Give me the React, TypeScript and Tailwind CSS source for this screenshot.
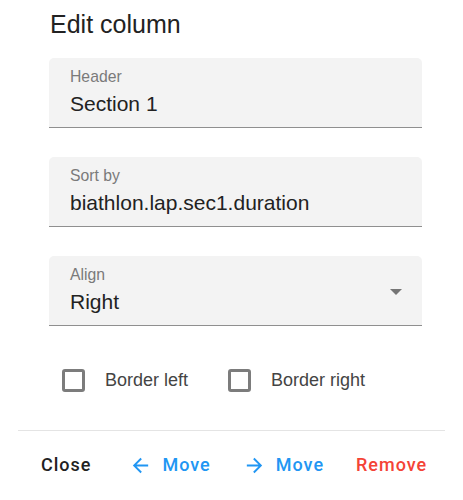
import React from "react";

function Field({ label, value, select }: { label: string; value: string; select?: boolean }) {
  return (
    <div className="relative h-[70px] rounded-t-[5px] bg-[#f3f3f3] border-b border-[#8f8f8f] px-[21px]">
      <div className="pt-[10px] text-[15.75px] leading-[18px] text-[#7a7a7a]">{label}</div>
      <div className="mt-[6px] text-[21px] leading-[24px] text-[#222]">{value}</div>
      {select && (
        <svg className="absolute right-[20px] top-[33px]" width="12" height="6" viewBox="0 0 12 6">
          <path d="M0 0h12L6 6z" fill="#757575" />
        </svg>
      )}
    </div>
  );
}

function Check({ label }: { label: string }) {
  return (
    <label className="flex items-center gap-[20px]">
      <span className="w-[23px] h-[23px] rounded-[3px] border-[3px] border-[#7c7c7c]" />
      <span className="text-[18px] leading-[23px] text-[#444]">{label}</span>
    </label>
  );
}

export default function App() {
  return (
    <div className="w-[463px] h-[500px] bg-white" style={{ fontFamily: '"Liberation Sans", Arial, sans-serif' }}>
      <div className="pl-[49px] pr-[41px]">
        <h2 className="pt-[8px] pl-[1px] text-[25px] leading-[32px] font-normal text-[#222]">Edit column</h2>
        <div className="mt-[18px] flex flex-col gap-[29px]">
          <Field label="Header" value="Section 1" />
          <Field label="Sort by" value="biathlon.lap.sec1.duration" />
          <Field label="Align" value="Right" select />
        </div>
        <div className="mt-[43px] ml-[13px] flex items-center gap-[40px] h-[23px]">
          <Check label="Border left" />
          <Check label="Border right" />
        </div>
      </div>
      <div className="mt-[38px] mx-[18px] border-t border-[#e4e4e4]" />
      <div className="mt-[22px] flex items-center h-[24px] text-[18px] leading-[24px] font-medium tracking-[1px] font-[Roboto,sans-serif]">
        <button className="ml-[41px] text-[#222]">Close</button>
        <button className="ml-[38px] flex items-center gap-[10px] text-[#2196f3]">
          <svg width="23" height="23" viewBox="0 0 24 24" fill="currentColor">
            <path d="M20 11H7.83l5.59-5.59L12 4l-8 8 8 8 1.41-1.41L7.83 13H20v-2z" />
          </svg>
          Move
        </button>
        <button className="ml-[32px] flex items-center gap-[10px] text-[#2196f3]">
          <svg width="23" height="23" viewBox="0 0 24 24" fill="currentColor">
            <path d="M12 4l-1.41 1.41L16.17 11H4v2h12.17l-5.58 5.59L12 20l8-8z" />
          </svg>
          Move
        </button>
        <button className="ml-[32px] text-[#f44336]">Remove</button>
      </div>
    </div>
  );
}
